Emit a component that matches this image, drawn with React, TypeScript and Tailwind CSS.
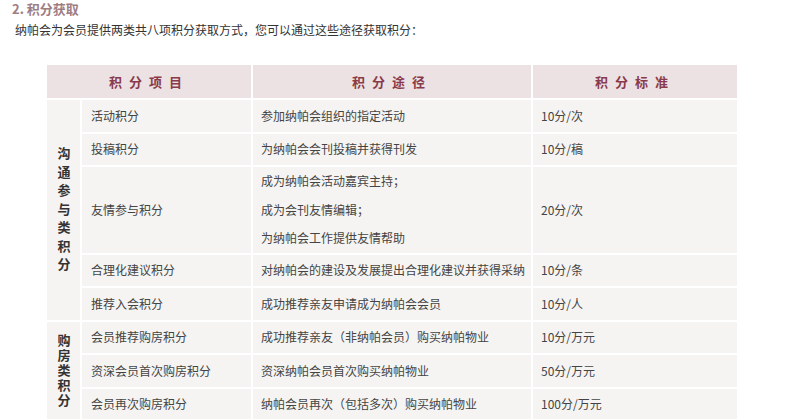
import React from 'react';

interface PointRow {
  item: string;
  ways: string[];
  standard: string;
}

interface PointGroup {
  name: string;
  tracking: string;
  rows: PointRow[];
}

const groups: PointGroup[] = [
  {
    name: '沟通参与类积分',
    tracking: 'tracking-[5.5px] pt-[8px]',
    rows: [
      { item: '活动积分', ways: ['参加纳帕会组织的指定活动'], standard: '10分/次' },
      { item: '投稿积分', ways: ['为纳帕会会刊投稿并获得刊发'], standard: '10分/稿' },
      {
        item: '友情参与积分',
        ways: ['成为纳帕会活动嘉宾主持；', '成为会刊友情编辑；', '为纳帕会工作提供友情帮助'],
        standard: '20分/次',
      },
      { item: '合理化建议积分', ways: ['对纳帕会的建设及发展提出合理化建议并获得采纳'], standard: '10分/条' },
      { item: '推荐入会积分', ways: ['成功推荐亲友申请成为纳帕会会员'], standard: '10分/人' },
    ],
  },
  {
    name: '购房类积分',
    tracking: 'tracking-[2px] pt-[5px]',
    rows: [
      { item: '会员推荐购房积分', ways: ['成功推荐亲友（非纳帕会员）购买纳帕物业'], standard: '10分/万元' },
      { item: '资深会员首次购房积分', ways: ['资深纳帕会员首次购买纳帕物业'], standard: '50分/万元' },
      { item: '会员再次购房积分', ways: ['纳帕会员再次（包括多次）购买纳帕物业'], standard: '100分/万元' },
    ],
  },
];

const App: React.FC = () => {
  return (
    <div
      className="w-[786px] h-[419px] overflow-hidden bg-white text-[12px] text-[#444]"
      style={{ fontFamily: '"Noto Sans CJK SC", "Liberation Sans", sans-serif' }}
    >
      <h2 className="pl-[12px] pt-[1px] text-[13px] font-bold leading-[15px] text-[#9e7d83]">2. 积分获取</h2>
      <p className="pl-[15px] pt-[6px] leading-[16px] text-[#333]">
        纳帕会为会员提供两类共八项积分获取方式，您可以通过这些途径获取积分：
      </p>

      <table className="ml-[45px] mt-[25px] w-[694px] table-fixed border-separate border-spacing-[2px]">
        <colgroup>
          <col className="w-[33px]" />
          <col className="w-[169px]" />
          <col className="w-[278px]" />
          <col />
        </colgroup>
        <thead>
          <tr className="h-[33px] bg-[#ece2e3] text-[13px] font-bold tracking-[7px] text-[#8a3a4b]">
            <th colSpan={2} className="font-bold">积分项目</th>
            <th className="font-bold">积分途径</th>
            <th className="font-bold">积分标准</th>
          </tr>
        </thead>
        <tbody>
          {groups.map((group) =>
            group.rows.map((row, i) => (
              <tr key={row.item} className="bg-[#f6f4f2]">
                {i === 0 && (
                  <td rowSpan={group.rows.length} className="text-center">
                    <div
                      className={`inline-block text-[13px] font-bold leading-[16px] text-[#333] [writing-mode:vertical-rl] ${group.tracking}`}
                    >
                      {group.name}
                    </div>
                  </td>
                )}
                <td className="h-[31.5px] pl-[9px]">{row.item}</td>
                <td className="pl-[8px]">
                  {row.ways.length > 1 ? (
                    <div className="leading-[28.5px]">
                      {row.ways.map((w) => (
                        <div key={w}>{w}</div>
                      ))}
                    </div>
                  ) : (
                    row.ways[0]
                  )}
                </td>
                <td className="pl-[8px]">{row.standard}</td>
              </tr>
            ))
          )}
        </tbody>
      </table>
    </div>
  );
};

export default App;
